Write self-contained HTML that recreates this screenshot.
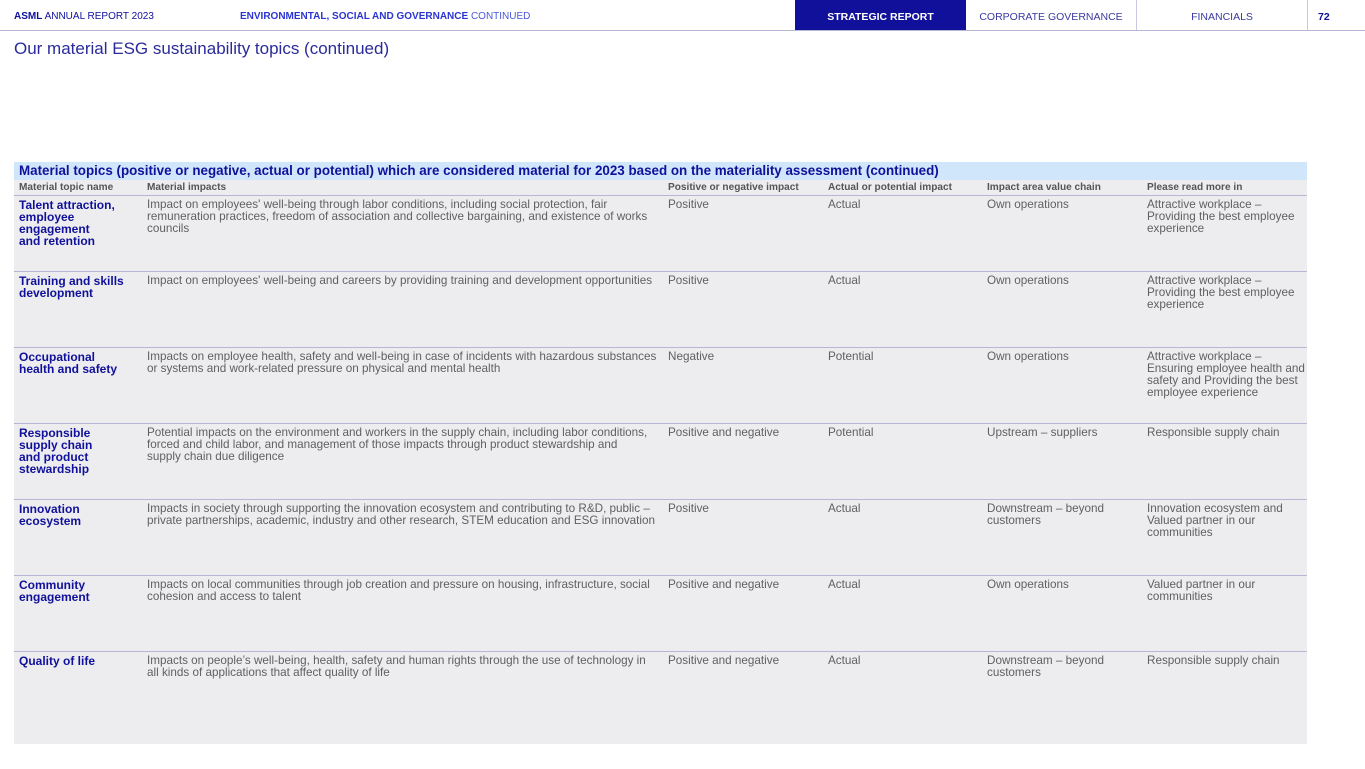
<!DOCTYPE html>
<html><head><meta charset="utf-8"><style>
*{margin:0;padding:0;box-sizing:border-box}
body{width:1365px;height:769px;background:#fff;font-family:"Liberation Sans",Arial,sans-serif;position:relative;overflow:hidden}
.a{position:absolute;white-space:nowrap}
.top{font-size:10px;top:11px;color:#1a1a9c}
.tbl{position:absolute;left:14px;top:162px;width:1293px;height:582px;background:#ededf0}
.cap{position:absolute;left:0;top:0;width:1293px;height:18px;background:#cfe6fb;color:#10109a;font-weight:bold;font-size:13.4px;padding:1px 5px;line-height:16px;white-space:nowrap}
.hd{position:absolute;top:18px;left:0;width:1293px;height:16px;border-bottom:1px solid #b6b6d6;font-size:10.1px;font-weight:bold;color:#555;line-height:16px}
.hd span,.row span{position:absolute;top:0;white-space:nowrap}
.row{position:absolute;left:0;width:1293px;height:76px;border-top:1px solid #b6b6d6;font-size:11.7px;line-height:12px;color:#606060}
.row span{top:3px}
.row b{position:absolute;left:5px;top:3px;color:#10109a;font-size:12px;line-height:12px;white-space:nowrap}
</style></head><body>
<div class="a top" style="left:14px;color:#10109a"><b>ASML</b> ANNUAL REPORT 2023</div>
<div class="a top" style="left:240px;color:#2a35d0"><b>ENVIRONMENTAL, SOCIAL AND GOVERNANCE</b> <span style="color:#4a58d8">CONTINUED</span></div>
<div class="a" style="left:795px;top:0;width:171px;height:30px;background:#10109a;color:#fff;font-weight:bold;font-size:10.5px;text-align:center;line-height:34px">STRATEGIC REPORT</div>
<div class="a" style="left:966px;top:0;width:170px;height:30px;color:#3a3aa0;font-size:10.5px;text-align:center;line-height:34px">CORPORATE GOVERNANCE</div>
<div class="a" style="left:1136px;top:0;width:1px;height:30px;background:#c8c8e0"></div>
<div class="a" style="left:1137px;top:0;width:170px;height:30px;color:#3a3aa0;font-size:10.5px;text-align:center;line-height:34px">FINANCIALS</div>
<div class="a" style="left:1307px;top:0;width:1px;height:30px;background:#c8c8e0"></div>
<div class="a" style="left:1318px;top:11px;font-size:10.5px;font-weight:bold;color:#10109a">72</div>
<div class="a" style="left:0;top:30px;width:1365px;height:1px;background:#b6b6d6"></div>
<div class="a" style="left:14px;top:39px;font-size:17px;color:#2a2a9a">Our material ESG sustainability topics (continued)</div>
<div class="tbl">
<div class="cap">Material topics (positive or negative, actual or potential) which are considered material for 2023 based on the materiality assessment (continued)</div>
<div class="hd"><span style="left:5px">Material topic name</span><span style="left:133px">Material impacts</span><span style="left:654px">Positive or negative impact</span><span style="left:814px">Actual or potential impact</span><span style="left:973px">Impact area value chain</span><span style="left:1133px">Please read more in</span></div>

<div class="row" style="top:34px;border-top:none"><b>Talent attraction,<br>employee<br>engagement<br>and retention</b><span style="left:133px">Impact on employees' well-being through labor conditions, including social protection, fair<br>remuneration practices, freedom of association and collective bargaining, and existence of works<br>councils</span><span style="left:654px">Positive</span><span style="left:814px">Actual</span><span style="left:973px">Own operations</span><span style="left:1133px">Attractive workplace –<br>Providing the best employee<br>experience</span></div>

<div class="row" style="top:109px"><b>Training and skills<br>development</b><span style="left:133px">Impact on employees' well-being and careers by providing training and development opportunities</span><span style="left:654px">Positive</span><span style="left:814px">Actual</span><span style="left:973px">Own operations</span><span style="left:1133px">Attractive workplace –<br>Providing the best employee<br>experience</span></div>

<div class="row" style="top:185px"><b>Occupational<br>health and safety</b><span style="left:133px">Impacts on employee health, safety and well-being in case of incidents with hazardous substances<br>or systems and work-related pressure on physical and mental health</span><span style="left:654px">Negative</span><span style="left:814px">Potential</span><span style="left:973px">Own operations</span><span style="left:1133px">Attractive workplace –<br>Ensuring employee health and<br>safety and Providing the best<br>employee experience</span></div>

<div class="row" style="top:261px"><b>Responsible<br>supply chain<br>and product<br>stewardship</b><span style="left:133px">Potential impacts on the environment and workers in the supply chain, including labor conditions,<br>forced and child labor, and management of those impacts through product stewardship and<br>supply chain due diligence</span><span style="left:654px">Positive and negative</span><span style="left:814px">Potential</span><span style="left:973px">Upstream – suppliers</span><span style="left:1133px">Responsible supply chain</span></div>

<div class="row" style="top:337px"><b>Innovation<br>ecosystem</b><span style="left:133px">Impacts in society through supporting the innovation ecosystem and contributing to R&amp;D, public –<br>private partnerships, academic, industry and other research, STEM education and ESG innovation</span><span style="left:654px">Positive</span><span style="left:814px">Actual</span><span style="left:973px">Downstream – beyond<br>customers</span><span style="left:1133px">Innovation ecosystem and<br>Valued partner in our<br>communities</span></div>

<div class="row" style="top:413px"><b>Community<br>engagement</b><span style="left:133px">Impacts on local communities through job creation and pressure on housing, infrastructure, social<br>cohesion and access to talent</span><span style="left:654px">Positive and negative</span><span style="left:814px">Actual</span><span style="left:973px">Own operations</span><span style="left:1133px">Valued partner in our<br>communities</span></div>

<div class="row" style="top:489px;height:93px"><b>Quality of life</b><span style="left:133px">Impacts on people’s well-being, health, safety and human rights through the use of technology in<br>all kinds of applications that affect quality of life</span><span style="left:654px">Positive and negative</span><span style="left:814px">Actual</span><span style="left:973px">Downstream – beyond<br>customers</span><span style="left:1133px">Responsible supply chain</span></div>
</div>
</body></html>
